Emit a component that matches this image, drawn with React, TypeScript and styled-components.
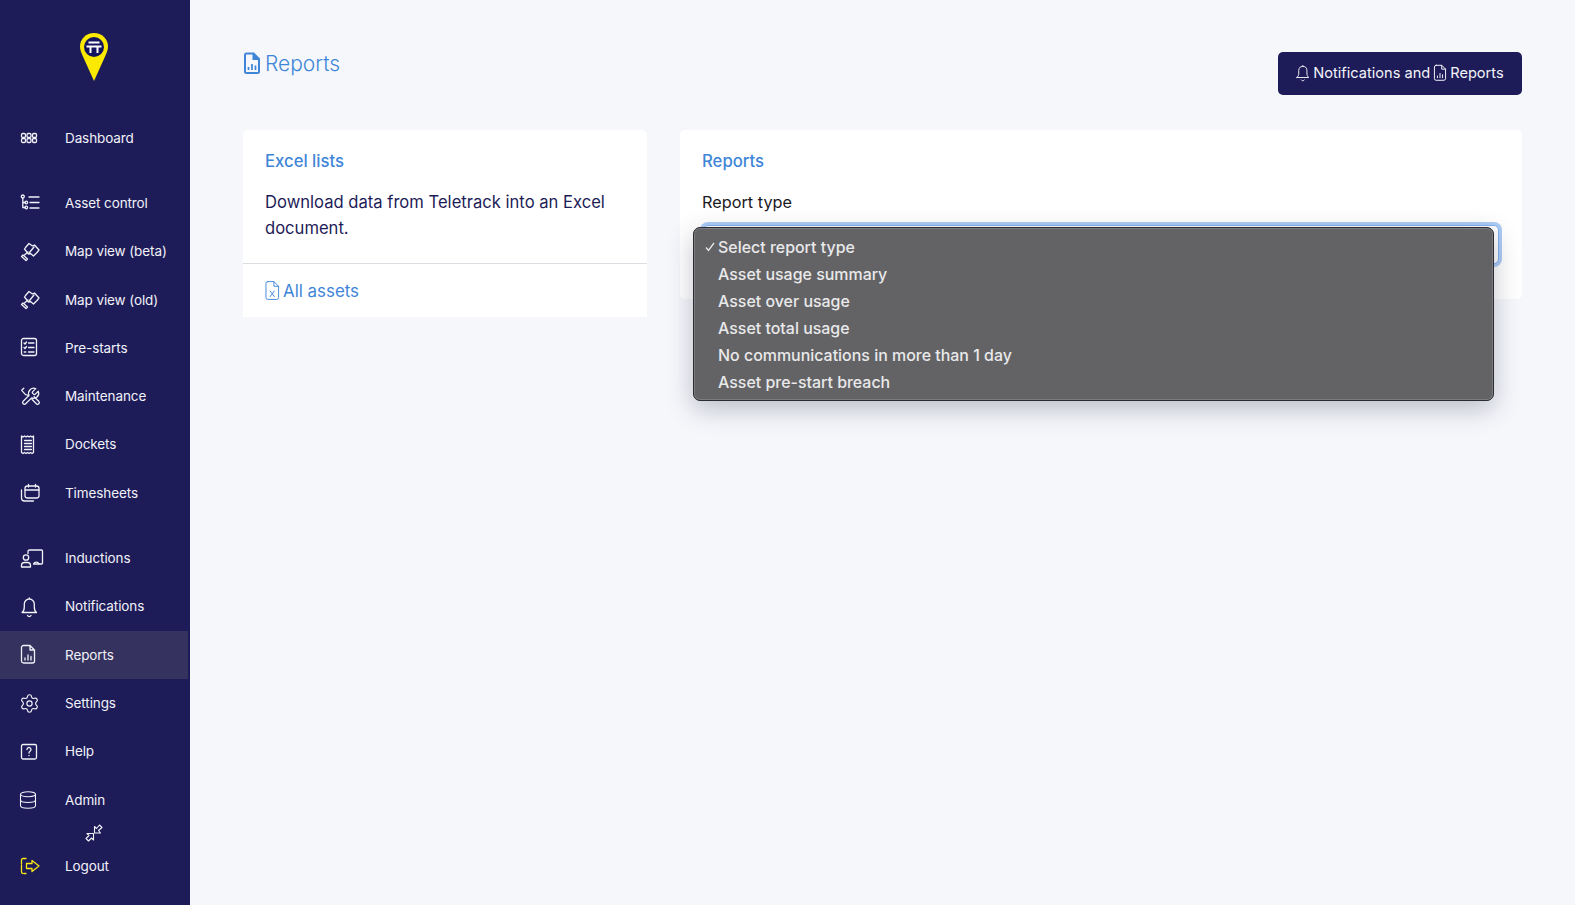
import React from 'react';
import styled, { createGlobalStyle } from 'styled-components';
import { Database, Settings } from 'lucide-react';

const GlobalStyle = createGlobalStyle`
  html, body, #root {
    margin: 0;
    padding: 0;
    height: 100%;
  }
  body {
    background: #f5f7fb;
    font-family: Inter, "Noto Sans", sans-serif;
    overflow: hidden;
  }
`;

const Page = styled.div`
  display: flex;
  height: 905px;
`;

const Sidebar = styled.nav`
  width: 190px;
  flex-shrink: 0;
  background: #1e1c58;
  display: flex;
  flex-direction: column;
`;

const LogoWrap = styled.div`
  height: 114px;
  padding-top: 32px;
  box-sizing: border-box;
  display: flex;
  justify-content: center;
  padding-right: 3px;
`;

const NavGroup = styled.div`
  display: flex;
  flex-direction: column;
  margin-bottom: 17px;
`;

const NavRow = styled.a<{ $active?: boolean }>`
  display: flex;
  align-items: center;
  height: 48.3px;
  padding-left: 20px;
  margin-right: 2px;
  color: #f1f1f8;
  font-size: 13.5px;
  letter-spacing: -0.1px;
  background: ${(p) => (p.$active ? '#35325f' : 'transparent')};
`;

const NavLabel = styled.span`
  padding-bottom: 1px;
`;

const IconSlot = styled.span`
  width: 45px;
  height: 24px;
  flex-shrink: 0;
  display: flex;
  align-items: center;
  color: #f1f1f8;

  svg {
    display: block;
    fill: none;
    stroke: currentColor;
    stroke-width: 1.3;
    stroke-linecap: round;
    stroke-linejoin: round;
  }
`;

const CollapseRow = styled.div`
  height: 20px;
  margin-top: -18px;
  margin-bottom: -1px;
  display: flex;
  justify-content: center;
  padding-right: 2px;
  color: #f1f1f8;
`;

const LogoutRow = styled(NavRow)`
  ${IconSlot} {
    color: #f5e616;
  }
`;

const GearIcon = styled(Settings)`
  margin-left: -1px;
`;

const DatabaseIcon = styled(Database)`
  margin-left: -2px;
`;

const Main = styled.main`
  flex: 1;
  min-width: 0;
  padding: 48px 53px 0;
`;

const Header = styled.header`
  display: flex;
  justify-content: space-between;
  align-items: flex-start;
  margin-bottom: 35px;
`;

const PageTitle = styled.h1`
  margin: 0;
  display: flex;
  align-items: center;
  gap: 4px;
  height: 30px;
  font-size: 21px;
  font-weight: 300;
  color: #3f86d8;
  svg {
    display: block;
    margin-bottom: 1px;
  }
`;

const HeaderButton = styled.button`
  margin-top: 4px;
  height: 43px;
  width: 244px;
  padding: 0 0 2px;
  border: none;
  border-radius: 5px;
  background: #1e1c58;
  color: #f4f4fa;
  font-family: inherit;
  font-size: 14.6px;
  display: flex;
  align-items: center;
  justify-content: center;
  gap: 3px;
  svg {
    display: block;
    fill: none;
    stroke: currentColor;
    stroke-width: 1.15;
    stroke-linecap: round;
    stroke-linejoin: round;
  }
`;

const Columns = styled.div`
  display: grid;
  grid-template-columns: 404px 842px;
  gap: 33px;
  align-items: start;
`;

const Card = styled.section`
  background: #fff;
  border-radius: 5px 5px 0 0;
`;

const FormCard = styled(Card)`
  border-radius: 5px;
  padding-bottom: 35px;
`;

const CardBody = styled.div`
  padding: 20px 22px 22px;
`;

const CardTitle = styled.h2`
  margin: 0 0 17px;
  font-size: 16.7px;
  line-height: 22px;
  font-weight: 500;
  color: #3f86d8;
`;

const CardText = styled.p`
  margin: 0;
  font-size: 16.6px;
  line-height: 26px;
  color: #1e1c58;
`;

const CardFooter = styled.a`
  display: flex;
  align-items: center;
  gap: 3px;
  height: 53px;
  padding-left: 22px;
  border-top: 1px solid #dcdde2;
  font-size: 16.9px;
  color: #3f86d8;
  svg {
    display: block;
    fill: none;
    stroke: currentColor;
    stroke-width: 1;
    stroke-linecap: round;
    stroke-linejoin: round;
  }
`;

const FieldBlock = styled.div`
  padding: 20px 22px 0;
`;

const FieldLabel = styled.label`
  display: block;
  font-size: 16.3px;
  line-height: 26px;
  color: #1a1a1f;
  margin-bottom: 10px;
`;

const SelectBox = styled.div`
  position: relative;
  height: 39px;
  border: 1px solid #7fb0ee;
  border-radius: 5px;
  box-sizing: border-box;
  margin: 0 23px;
  box-shadow: 0 0 0 3px #acccf6;
  background: #fff;
`;

const OptionMenu = styled.ul`
  position: absolute;
  z-index: 5;
  top: 1px;
  left: -11px;
  right: 4px;
  height: 174px;
  box-sizing: border-box;
  margin: 0;
  padding: 6px 0 0 24px;
  list-style: none;
  background: #636366;
  border: 1px solid #2c2c30;
  border-radius: 7px;
  box-shadow: inset 0 0 0 1px #7c7c80, 0 8px 26px rgba(40, 44, 70, 0.28);
`;

const OptionItem = styled.li`
  position: relative;
  height: 27px;
  font-size: 15.95px;
  line-height: 27px;
  font-weight: 500;
  color: #e9e9ea;
  white-space: nowrap;
`;

const CheckMark = styled.svg`
  position: absolute;
  left: -13px;
  top: 8px;
  fill: none;
  stroke: #e9e9ea;
  stroke-width: 1.3;
`;

// sidebar icons, drawn at 1 unit = 1px from the left of the slot
const icon = (children: React.ReactNode) => (
  <svg width={24} height={24} viewBox="0 0 24 24">
    {children}
  </svg>
);

const DashboardIcon = () =>
  icon(
    <>
      {[1.5, 7, 12.5].map((x) =>
        [7.5, 12.5].map((y) => <rect key={`${x}-${y}`} x={x} y={y} width={4} height={4} rx={1.3} />)
      )}
    </>
  );

const TreeIcon = () =>
  icon(
    <>
      <circle cx={2.8} cy={5.5} r={1.5} />
      <path d="M2.8 7v9.5h2.2M2.8 11.5h2.2" />
      <circle cx={6.3} cy={11.5} r={1.3} />
      <circle cx={6.3} cy={16.5} r={1.3} />
      <path d="M9 6h10M10 11.5h9M10 17h9" />
    </>
  );

const SatelliteIcon = () =>
  icon(
    <>
      <path d="M9 3.5l3.5 2.5 2-1 4.500 5-2 2.500-3.500 3.500-3-2.500-2 .5-4-5 1-1.500z" />
      <path d="M14 7L9.500 12.500M8 12l-3.500 3" />
      <path d="M1.500 16.500l1.500-1.500 4.500 4-1.500 1.500z" />
    </>
  );

const ChecklistIcon = () =>
  icon(
    <>
      <rect x={1.5} y={2.5} width={15} height={17} rx={2} />
      <path d="M8.5 7h5.5M8.5 11.5h5.5M8.5 16h5.5" />
      <path d="M4 7l1 1 1.500-2M4 11.5l1 1 1.500-2M4.200 16h1.600" />
    </>
  );

const ToolsIcon = () =>
  icon(
    <g transform="translate(0 1.5) scale(0.85)">
      <path d="M14.700 6.300a1 1 0 0 0 0 1.400l1.600 1.600a1 1 0 0 0 1.400 0l3.800-3.800a6 6 0 0 1-7.900 7.900l-6.900 6.900a2.100 2.100 0 0 1-3-3l6.900-6.900a6 6 0 0 1 7.900-7.900l-3.800 3.800z" strokeWidth={1.5} />
      <path d="M4.500 2L2 4.500l4.500 5 2 .3 1.500 1.500M14 15l5.500 5.500a2 2 0 0 0 2.800-2.800L16.500 12" strokeWidth={1.5} />
    </g>
  );

const ReceiptIcon = () =>
  icon(
    <>
      <path d="M1.500 3l1.500 1 1.500-1 1.500 1 1.500-1 1.500 1 1.500-1 1.500 1 1.500-1v16.500l-1.500 1-1.500-1-1.500 1-1.500-1-1.500 1-1.500-1-1.500 1-1.500-1z" />
      <path d="M4.500 7.500h7M4.500 10.500h7M4.500 13.500h7M4.500 16.500h7" />
    </>
  );

const CalendarsIcon = () =>
  icon(
    <>
      <rect x={5} y={5} width={14} height={12} rx={2.5} />
      <path d="M5 9h14M8.500 3.500V6M15.500 3.500V6M1.500 9v8a3 3 0 0 0 3 3h9" />
    </>
  );

const InductionIcon = () =>
  icon(
    <>
      <path d="M8 6.500V4.500A1.500 1.500 0 0 1 9.500 3h12a1 1 0 0 1 1 1v12a1 1 0 0 1-1 1H19" />
      <circle cx={6} cy={10.5} r={2.7} />
      <path d="M1.500 20v-1.500A3 3 0 0 1 4.500 15.500h3a3 3 0 0 1 3 3V20zM13.500 17a3 3 0 0 1 5.500 0z" />
    </>
  );

const BELL_PATH =
  'M2 17.5h14.5c-1.5-1-2.2-3-2.2-5.5V9a5 5 0 0 0-10 0v3c0 2.5-.8 4.500-2.300 5.500zM7.500 20.500a2 2 0 0 0 3.500 0M9.300 4V2.800';
const FILE_CHART_PATH =
  'M3.500 2.500h6.500l4.500 4.500v11a2 2 0 0 1-2 2h-9a2 2 0 0 1-2-2v-13.500a2 2 0 0 1 2-2zM10 2.500V7h4.500M5 17v-2M8 17v-5M11 17v-3.500';

const BellIcon = () => icon(<path d={BELL_PATH} />);
const FileChartIcon = () => icon(<path d={FILE_CHART_PATH} />);

const HelpIcon = () =>
  icon(
    <>
      <rect x={1.5} y={4.5} width={15} height={14.5} rx={1.5} />
      <path d="M7 9.500a2 2 0 1 1 3.200 1.600c-.8.6-1.200 1-1.200 2M9 15.300v.3" />
    </>
  );

const SettingsIcon = () => <GearIcon size={21} strokeWidth={1.2} />;
const AdminIcon = () => <DatabaseIcon size={20} strokeWidth={1.25} />;

const CollapseIcon = () => (
  <svg width={20} height={20} viewBox="0 0 20 20" fill="none" stroke="currentColor" strokeWidth={1.1} strokeLinejoin="round">
    <path d="M10.500 10V3.500l2 2 3-3.500 2.500 2.500-3.500 3 2 2.500z" />
    <path d="M9.500 10.500V17l-2-2-3 3L2 15.500l3-3-2-2z" />
  </svg>
);

const LogoutIcon = () =>
  icon(
    <>
      <path d="M6 4.500H3A1.500 1.500 0 0 0 1.500 6v12A1.500 1.500 0 0 0 3 19.500h3" strokeDasharray="9 1.200" />
      <path d="M6.500 9.500H12v-3l7 5.500-7 5.500v-3H6.500z" />
    </>
  );

const TitleFileIcon = () => (
  <svg width={18} height={24} viewBox="0 0 18 24">
    <path
      fillRule="evenodd"
      fill="#3f86d8"
      d="M3.500 1.500H11l6 6v13a2.500 2.500 0 0 1-2.500 2.500h-11A2.500 2.500 0 0 1 1 20.500V4a2.500 2.500 0 0 1 2.500-2.500zM3.500 3.500A.5.5 0 0 0 3 4v16.500a.5.5 0 0 0 .5.5h11a.5.5 0 0 0 .5-.5V9H9.500V3.500z"
    />
    <path d="M5.500 19v-3M9 19v-6M12.500 19v-4.500" stroke="#3f86d8" strokeWidth={1.7} />
  </svg>
);

const ExcelFileIcon = () => (
  <svg width={15} height={21} viewBox="0 0 16 22">
    <path d="M3 1.500h6.500l5 5v12a2 2 0 0 1-2 2H3a2 2 0 0 1-2-2v-15a2 2 0 0 1 2-2zM9.500 1.500v5h5" />
    <path d="M5.500 11.500l4.500 6M10 11.500l-4.500 6" />
  </svg>
);

const Logo = () => (
  <svg width={30} height={50} viewBox="0 0 30 50">
    <path d="M15 1C7 1 1 7 1 14.500c0 3 1 5.500 2.500 9L15 49l11.500-25.500c1.500-3.500 2.500-6 2.500-9C29 7 23 1 15 1z" fill="#fbe900" />
    <circle cx={15} cy={15} r={10} fill="#14145e" />
    <path d="M9.500 10.500h11M7.500 14.500h15M11.500 14.500v6.500M18.500 14.500v6.500" stroke="#fff" strokeWidth={2} fill="none" />
  </svg>
);

type NavItem = { label: string; Icon: React.ComponentType; active?: boolean };

const navGroups: NavItem[][] = [
  [{ label: 'Dashboard', Icon: DashboardIcon }],
  [
    { label: 'Asset control', Icon: TreeIcon },
    { label: 'Map view (beta)', Icon: SatelliteIcon },
    { label: 'Map view (old)', Icon: SatelliteIcon },
    { label: 'Pre-starts', Icon: ChecklistIcon },
    { label: 'Maintenance', Icon: ToolsIcon },
    { label: 'Dockets', Icon: ReceiptIcon },
    { label: 'Timesheets', Icon: CalendarsIcon },
  ],
  [
    { label: 'Inductions', Icon: InductionIcon },
    { label: 'Notifications', Icon: BellIcon },
    { label: 'Reports', Icon: FileChartIcon, active: true },
    { label: 'Settings', Icon: SettingsIcon },
    { label: 'Help', Icon: HelpIcon },
    { label: 'Admin', Icon: AdminIcon },
  ],
];

const reportTypes = [
  'Select report type',
  'Asset usage summary',
  'Asset over usage',
  'Asset total usage',
  'No communications in more than 1 day',
  'Asset pre-start breach',
];

export default function App() {
  return (
    <Page>
      <GlobalStyle />
      <Sidebar>
        <LogoWrap>
          <Logo />
        </LogoWrap>
        {navGroups.map((group, i) => (
          <NavGroup key={i}>
            {group.map(({ label, Icon, active }) => (
              <NavRow key={label} $active={active}>
                <IconSlot>
                  <Icon />
                </IconSlot>
                <NavLabel>{label}</NavLabel>
              </NavRow>
            ))}
          </NavGroup>
        ))}
        <CollapseRow>
          <CollapseIcon />
        </CollapseRow>
        <LogoutRow>
          <IconSlot>
            <LogoutIcon />
          </IconSlot>
          <NavLabel>Logout</NavLabel>
        </LogoutRow>
      </Sidebar>
      <Main>
        <Header>
          <PageTitle>
            <TitleFileIcon />
            Reports
          </PageTitle>
          <HeaderButton>
            <svg width={14} height={18} viewBox="1 1 17 22">
              <path d={BELL_PATH} />
            </svg>
            Notifications and
            <svg width={14} height={18} viewBox="0 1 16 21">
              <path d={FILE_CHART_PATH} />
            </svg>
            Reports
          </HeaderButton>
        </Header>
        <Columns>
          <Card>
            <CardBody>
              <CardTitle>Excel lists</CardTitle>
              <CardText>Download data from Teletrack into an Excel document.</CardText>
            </CardBody>
            <CardFooter>
              <ExcelFileIcon />
              All assets
            </CardFooter>
          </Card>
          <FormCard>
            <FieldBlock>
              <CardTitle>Reports</CardTitle>
              <FieldLabel>Report type</FieldLabel>
            </FieldBlock>
            <SelectBox>
              <OptionMenu>
                {reportTypes.map((type, i) => (
                  <OptionItem key={type}>
                    {i === 0 && (
                      <CheckMark width={10} height={10} viewBox="0 0 10 10">
                        <path d="M1 5.500l2.500 3L9 1" />
                      </CheckMark>
                    )}
                    {type}
                  </OptionItem>
                ))}
              </OptionMenu>
            </SelectBox>
          </FormCard>
        </Columns>
      </Main>
    </Page>
  );
}
